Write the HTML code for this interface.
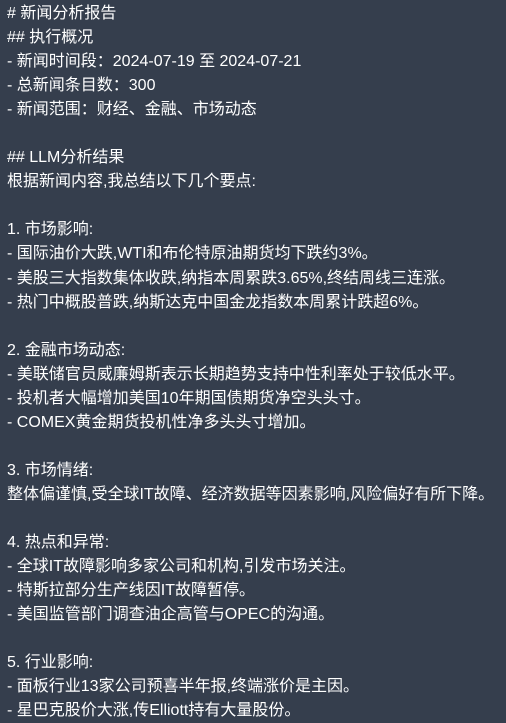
<!DOCTYPE html>
<html><head><meta charset="utf-8"><style>
html,body{margin:0;padding:0;background:#353e4d;}
body{width:506px;height:717px;overflow:hidden;color:#fff;font:16px/24.05px "Liberation Sans","Noto Sans CJK SC",sans-serif;padding-left:7px;padding-top:2px;white-space:pre;box-sizing:border-box;}
</style></head><body># 新闻分析报告
## 执行概况
- 新闻时间段：2024-07-19 至 2024-07-21
- 总新闻条目数：300
- 新闻范围：财经、金融、市场动态

## LLM分析结果
根据新闻内容,我总结以下几个要点:

1. 市场影响:
- 国际油价大跌,WTI和布伦特原油期货均下跌约3%。
- 美股三大指数集体收跌,纳指本周累跌3.65%,终结周线三连涨。
- 热门中概股普跌,纳斯达克中国金龙指数本周累计跌超6%。

2. 金融市场动态:
- 美联储官员威廉姆斯表示长期趋势支持中性利率处于较低水平。
- 投机者大幅增加美国10年期国债期货净空头头寸。
- COMEX黄金期货投机性净多头头寸增加。

3. 市场情绪:
整体偏谨慎,受全球IT故障、经济数据等因素影响,风险偏好有所下降。

4. 热点和异常:
- 全球IT故障影响多家公司和机构,引发市场关注。
- 特斯拉部分生产线因IT故障暂停。
- 美国监管部门调查油企高管与OPEC的沟通。

5. 行业影响:
- 面板行业13家公司预喜半年报,终端涨价是主因。
- 星巴克股价大涨,传Elliott持有大量股份。</body></html>
